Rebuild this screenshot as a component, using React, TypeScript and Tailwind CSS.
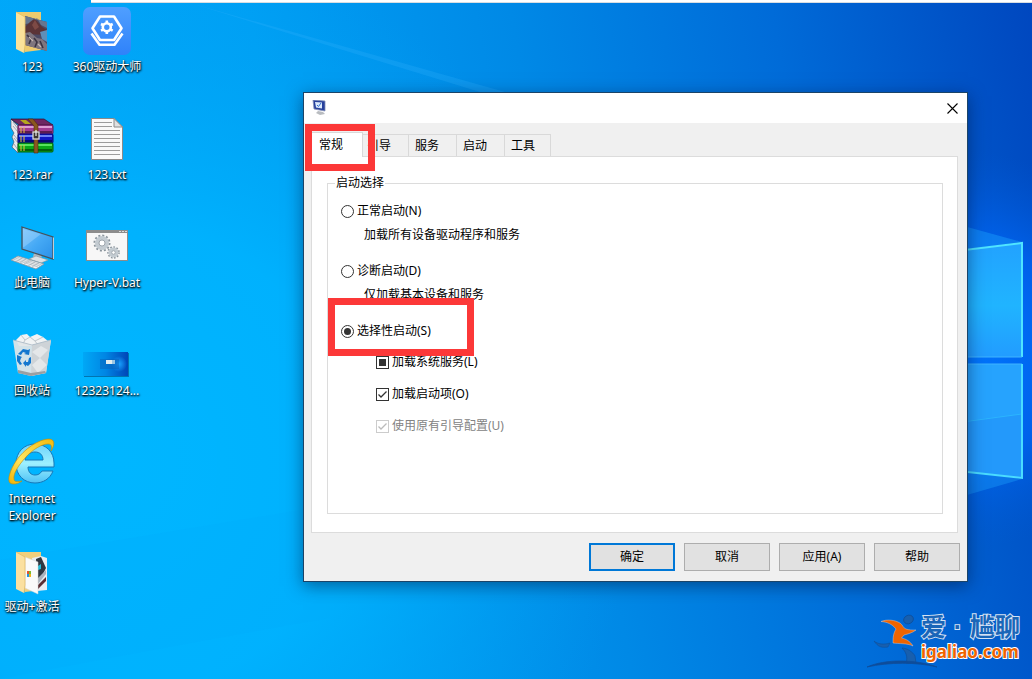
import { useEffect, useRef, useState } from "react";
import type { ReactNode } from "react";

const TABS = ["常规", "引导", "服务", "启动", "工具"];

function Wallpaper() {
  return (
    <svg
      className="absolute inset-0 h-full w-full"
      viewBox="0 0 1032 679"
      preserveAspectRatio="none"
      aria-hidden="true"
    >
      <defs>
        <linearGradient id="sky" x1="0" y1="0.12" x2="1" y2="0">
          <stop offset="0" stopColor="#00a9fb" />
          <stop offset="0.25" stopColor="#009ff4" />
          <stop offset="0.5" stopColor="#0089e6" />
          <stop offset="0.75" stopColor="#006bd8" />
          <stop offset="1" stopColor="#0047bf" />
        </linearGradient>
        <radialGradient id="leftGlow" gradientUnits="userSpaceOnUse" cx="120" cy="460" r="520">
          <stop offset="0" stopColor="#00b6ff" />
          <stop offset="0.45" stopColor="#00b4ff" stopOpacity="0.85" />
          <stop offset="1" stopColor="#00a0f0" stopOpacity="0" />
        </radialGradient>
        <radialGradient id="windowGlow" gradientUnits="userSpaceOnUse" cx="960" cy="350" r="200">
          <stop offset="0" stopColor="#0078ff" />
          <stop offset="0.55" stopColor="#0068fa" stopOpacity="0.7" />
          <stop offset="1" stopColor="#005ad8" stopOpacity="0" />
        </radialGradient>
        <linearGradient id="pane" x1="0" y1="0" x2="0" y2="1">
          <stop offset="0" stopColor="#22a2ff" />
          <stop offset="0.55" stopColor="#20b4ff" />
          <stop offset="1" stopColor="#229cff" />
        </linearGradient>
      </defs>
      <rect width="1032" height="679" fill="url(#sky)" />
      <rect width="1032" height="679" fill="url(#leftGlow)" />
      <rect width="1032" height="679" fill="url(#windowGlow)" />
      <path d="M190 3 L505 92 L480 92 Z" fill="#3bb8ff" opacity="0.22" />
      <path d="M0 560 Q150 535 330 505 L330 618 Q150 650 0 679 Z" fill="#00a8fa" opacity="0.2" />
      <path d="M960 225 L1022 242 L960 250 Z" fill="#1fa8ff" opacity="0.4" />
      <path d="M960 497 L1022 479 L960 471 Z" fill="#1fa8ff" opacity="0.35" />
      <path d="M940 253 L1022 243 V357 H940 Z" fill="url(#pane)" />
      <path d="M940 364 H1022 V478 L940 469 Z" fill="#2399fb" />
      <path d="M940 364 H1022 V414 L940 424 Z" fill="#28a6ff" opacity="0.7" />
      <path d="M940 425 L1022 414" stroke="#2fc0ff" opacity="0.7" />
      <path d="M940 253 L1022 243 V357" fill="none" stroke="#4fe4ff" strokeWidth="2" />
      <path d="M940 357 H1022 M940 364 H1022" stroke="#3fb4ff" />
      <path d="M1022 364 V478 L940 469" fill="none" stroke="#4adcff" strokeWidth="2" />
    </svg>
  );
}

function DesktopSvg({ children }: { children: ReactNode }) {
  return (
    <svg className="h-12 w-12 overflow-visible" viewBox="0 0 48 48" aria-hidden="true">
      {children}
    </svg>
  );
}

function PhotoFolderIcon() {
  return (
    <DesktopSvg>
      <path d="M8 4 H33 V42 L17 44 Z" fill="#eecb6e" />
      <path d="M17 8 L39 14 V43 L17 37 Z" fill="#4c4a63" />
      <path d="M17 8 L39 14 V20 L33 17 L29 10 L24 15 L17 16 Z" fill="#66768f" />
      <path d="M17 19 L22 14 L26 11 L29 13 L34 19 L39 22 V27 L17 26 Z" fill="#5b3436" />
      <path d="M24 17 L27 12 L31 19 L27 22 Z" fill="#7d4a45" />
      <path d="M32 24 L39 22 V34 L34 31 Z" fill="#5f8fb8" />
      <path d="M17 25 L22 24 L29 30 L34 31 L39 36 V43 L17 37 Z" fill="#7f767e" />
      <path d="M19 27 L23 31 L21 36 M26 30 L29 34 L27 39 M32 33 L35 40" stroke="#3b3442" strokeWidth="1.6" fill="none" />
      <path d="M21 29 L25 33 M30 36 L33 39" stroke="#c9b9b3" strokeWidth="1.2" />
      <path d="M8 4 L17 9 V37 L16 45 L8 41 Z" fill="#fbe29a" />
      <path d="M8 4 L17 9 V37 L16 45" fill="none" stroke="#e6bf5f" strokeWidth="0.8" />
    </DesktopSvg>
  );
}

function ToolFolderIcon() {
  return (
    <DesktopSvg>
      <path d="M8 4 H33 V42 L17 44 Z" fill="#f1cf7c" />
      <path d="M24 10 L33 8 L39 10 V42 L29 43 Z" fill="#e9edf1" />
      <path d="M28 11 L33 9 L38 20 L34 28 L29 31 Z" fill="#303741" />
      <path d="M29 31 L38 22 V26 L30 36 Z" fill="#aab2bd" />
      <path d="M30 37 L38 29 V33 L30 41 Z" fill="#5a2d33" />
      <path d="M30 18 L33 16 V21 L30 22 Z" fill="#23bcd8" />
      <path d="M17 9 L30 14 V46 L17 40 Z" fill="#fafafa" stroke="#d7d7d7" strokeWidth="0.5" />
      <path d="M19 23 H21 V26 H19 Z" fill="#e5552d" />
      <path d="M21 23 H23 V26 H21 Z" fill="#7dba2e" />
      <path d="M19 26 H21 V29 H19 Z" fill="#2196e0" />
      <path d="M21 26 H23 V29 H21 Z" fill="#f2b31c" />
      <path d="M8 4 L17 9 V37 L16 45 L8 41 Z" fill="#fbe0a0" />
      <path d="M8 4 L17 9 V37 L16 45" fill="none" stroke="#e2bd69" strokeWidth="0.8" />
    </DesktopSvg>
  );
}

function RarIcon() {
  const books = [
    { y: 9, dark: "#5c1d52", main: "#a23a92", light: "#dd9ad3", bands: "M13 11 V17 M16 11 V17" },
    { y: 18, dark: "#060872", main: "#1018c4", light: "#6a80f5", bands: "M13 20 V26 M16 20 V26" },
    { y: 27, dark: "#04600c", main: "#0aa818", light: "#56e45c", bands: "M13 29 V35 M16 29 V35" },
  ];
  return (
    <DesktopSvg>
      <path d="M3 3 L10 10 V37 L4 31 L6 26 L4 21 L6 17 L3 12 Z" fill="#e8e8ee" stroke="#4a4a58" strokeWidth="0.6" />
      <path d="M5 6 L10 13 M5 10 L10 16 M6 19 L10 24 M6 22 L10 27 M6 28 L10 34" stroke="#8a8a99" strokeWidth="0.7" />
      <path d="M3 3 H36 L45 9 H11 Z" fill="#6e2662" stroke="#32102c" strokeWidth="0.7" />
      <path d="M12 4 H18 L23 8 H17 Z" fill="#b5a71d" />
      {books.map((book) => (
        <g key={book.y}>
          <rect x="10" y={book.y} width="35" height="9" rx="1" fill={book.main} stroke={book.dark} />
          <rect x="11" y={book.y + 1} width="33" height="2" fill={book.light} />
          <rect x="11" y={book.y + 6} width="33" height="2" fill={book.dark} />
          <path d={book.bands} stroke="#e3c341" strokeWidth="1" />
        </g>
      ))}
      <path d="M20 3 H25 L30 9 V37 H26 V10 Z" fill="#8b5720" stroke="#4e2c0a" strokeWidth="0.6" />
      <rect x="25" y="16" width="6" height="7" fill="#3a3430" stroke="#d9d9d9" strokeWidth="1.3" />
      <path d="M28 14 V20" stroke="#f0f0f0" strokeWidth="1.2" />
    </DesktopSvg>
  );
}

function ComputerIcon() {
  return (
    <DesktopSvg>
      <defs>
        <linearGradient id="screen" x1="0" y1="0" x2="1" y2="1">
          <stop offset="0" stopColor="#7ac4fb" />
          <stop offset="0.5" stopColor="#45a9f5" />
          <stop offset="1" stopColor="#2a90e8" />
        </linearGradient>
      </defs>
      <path d="M26 29 L34 31 L33 35 L25 33 Z" fill="#aeb7bf" />
      <path d="M21 35 L28 32 L40 36 L33 39 Z" fill="#dde2e6" stroke="#8d979f" strokeWidth="0.6" />
      <path d="M14 3 L45 13 V35 L14 25 Z" fill="url(#screen)" stroke="#47535d" strokeWidth="1.3" />
      <path d="M15 5 L33 10 L16 23 L15 23 Z" fill="#b6e0ff" opacity="0.35" />
      <path d="M45 13 L46 14 V35 L45 35" fill="#c3ccd3" />
      <path d="M3 36 L10 32 L36 40 L28 45 Z" fill="#f0f2f4" stroke="#8b959d" strokeWidth="0.8" />
      <path
        d="M5 35 L30 43 M7 34 L32 42 M9 33 L34 41 M8 38 L14 34 M12 39 L18 35 M16 40 L23 36 M20 42 L27 38 M24 43 L31 39"
        stroke="#a2abb2"
        strokeWidth="0.6"
      />
    </DesktopSvg>
  );
}

function RecycleIcon() {
  return (
    <DesktopSvg>
      <path d="M8 8 L13 3 L19 2 L22 5 L29 2 L35 5 L40 9 L38 14 H11 Z" fill="#f1f3f4" />
      <path d="M13 3 L17 8 L22 5 L27 9 L35 5 M17 8 L15 12 M27 9 L30 13" stroke="#bfc6cb" strokeWidth="1" fill="none" />
      <path d="M5 8 L24 13 L43 8 L38 41 L23 44 L10 41 Z" fill="#e2e5e7" opacity="0.93" />
      <path d="M24 13 L43 8 L38 41 L23 44 Z" fill="#ced3d7" />
      <path d="M24 20 L33 14 L40 18 L32 26 Z M24 33 L32 26 L39 33 L30 41 Z" fill="#e4e7e9" />
      <path d="M5 8 L24 13 L43 8" fill="none" stroke="#a7b8c4" strokeWidth="0.8" />
      <path d="M10 41 L23 44 L38 41 L37 39 L23 41 L10 38 Z" fill="#9b9fa2" />
      <g fill="#1377cf">
        <path d="M12 20 L15 17 L20 18 L22 17 L21 23 L16 22 L18 21 L15 20 L13 23 L10 22 Z" />
        <path d="M9 23 L14 25 L13 26 L12 29 L14 32 L12 33 L9 29 Z" />
        <path d="M15 31 L18 28 V30 L20 30 L21 26 L23 25 L23 31 L20 34 L18 33 V35 Z" />
      </g>
    </DesktopSvg>
  );
}

function ExplorerIcon() {
  return (
    <DesktopSvg>
      <defs>
        <linearGradient id="ieBody" x1="0" y1="0" x2="0" y2="1">
          <stop offset="0" stopColor="#6fd3fb" />
          <stop offset="0.5" stopColor="#9df0ff" />
          <stop offset="1" stopColor="#4fc2f5" />
        </linearGradient>
        <linearGradient id="ieRing" x1="0" y1="1" x2="1" y2="0">
          <stop offset="0" stopColor="#f2b200" />
          <stop offset="0.4" stopColor="#ffe661" />
          <stop offset="1" stopColor="#f3b90c" />
        </linearGradient>
      </defs>
      <path
        d="M46 27 H20 C20 32 23 35 27 35 C30 35 32 34 34 31 H45 C42 39 35 43 27 43 C16 43 8 35 8 24 C8 12 16 4 27 4 C38 4 46 12 46 23 Z M17 20 H35 C35 15 32 12 27 12 C22 12 18 15 17 20 Z"
        fill="url(#ieBody)"
        stroke="#1878b8"
        strokeWidth="1"
        fillRule="evenodd"
      />
      <path
        d="M43 11 C47 5 47 -1 41 -1 C31 -1 16 9 8 21 C2 30 -1 40 2 43 C5 45 10 44 14 41 C9 42 6 42 6 39 C5 34 10 26 17 18 C25 9 34 4 40 4 C44 4 44 7 43 11 Z"
        fill="url(#ieRing)"
        stroke="#c68a00"
        strokeWidth="0.6"
      />
    </DesktopSvg>
  );
}

function DriverIcon() {
  return (
    <DesktopSvg>
      <defs>
        <linearGradient id="driver" x1="0" y1="0" x2="0" y2="1">
          <stop offset="0" stopColor="#4f9fff" />
          <stop offset="1" stopColor="#2f82fa" />
        </linearGradient>
      </defs>
      <rect x="0" y="-1" width="48" height="48" rx="7" fill="url(#driver)" />
      <g fill="none" stroke="#fff" strokeWidth="2.6" strokeLinejoin="round">
        <path d="M9.5 20.3 L17 8.5 H31 L38.5 20.3 L31 32 H17 Z" />
        <path d="M8.5 25.5 L16.5 36.7 H31.5 L39.5 25.5" />
        <circle cx="23.8" cy="19.3" r="4" />
      </g>
      <path
        d="M23.8 12.5 V15 M23.8 23.5 V26 M18 16 L20 17 M27.7 21.6 L29.7 22.7 M29.7 16 L27.7 17 M20 21.6 L18 22.7"
        stroke="#fff"
        strokeWidth="2.6"
      />
    </DesktopSvg>
  );
}

function TextFileIcon() {
  return (
    <DesktopSvg>
      <path d="M8.5 2.5 H31 L39.5 11 V43.5 H8.5 Z" fill="#f9f9f9" stroke="#8a8a8a" />
      <path d="M31 2.5 V11 H39.5 Z" fill="#e0e0e0" stroke="#8a8a8a" />
      <path
        d="M11 6.5 H29 M11 10.5 H29 M11 14.5 H37 M11 18.5 H37 M11 22.5 H37 M11 26.5 H37 M11 30.5 H37 M11 34.5 H37 M11 38.5 H37"
        stroke="#9c9c9c"
      />
    </DesktopSvg>
  );
}

function BatchFileIcon() {
  return (
    <DesktopSvg>
      <rect x="3.5" y="6.5" width="41" height="30" fill="#f7f7f7" stroke="#8c8c8c" />
      <rect x="3" y="6" width="42" height="3" fill="#8c8c8c" />
      <path d="M36 7.5 H38 M39 7.5 H41 M42 7.5 H44" stroke="#dcdcdc" />
      <circle cx="19" cy="19" r="7.5" fill="none" stroke="#8a949c" strokeWidth="2" strokeDasharray="2 1.93" />
      <circle cx="19" cy="19" r="5" fill="#fff" stroke="#c3cbd1" strokeWidth="4" />
      <circle cx="19" cy="19" r="3" fill="#fff" stroke="#8a949c" strokeWidth="0.8" />
      <circle cx="30.5" cy="28.5" r="5.5" fill="none" stroke="#8a949c" strokeWidth="1.6" strokeDasharray="1.6 1.54" />
      <circle cx="30.5" cy="28.5" r="3.5" fill="#fff" stroke="#c3cbd1" strokeWidth="3" />
      <circle cx="30.5" cy="28.5" r="1.8" fill="#fff" stroke="#8a949c" strokeWidth="0.8" />
    </DesktopSvg>
  );
}

function ImageFileIcon() {
  return (
    <DesktopSvg>
      <defs>
        <linearGradient id="thumb" x1="0" y1="0" x2="1" y2="0">
          <stop offset="0" stopColor="#00a8f6" />
          <stop offset="0.5" stopColor="#0086e4" />
          <stop offset="1" stopColor="#0046b8" />
        </linearGradient>
        <radialGradient id="thumbGlow">
          <stop offset="0" stopColor="#1aa0ff" />
          <stop offset="1" stopColor="#1aa0ff" stopOpacity="0" />
        </radialGradient>
      </defs>
      <rect x="1" y="21" width="45" height="24" fill="#00406f" opacity="0.55" />
      <rect x="0" y="20" width="45" height="24" fill="url(#thumb)" />
      <circle cx="36" cy="32" r="8" fill="url(#thumbGlow)" />
      <rect x="17" y="27" width="19" height="10" fill="#0a5fb4" opacity="0.45" />
      <rect x="23" y="28" width="6" height="4" fill="#e5eef0" />
      <rect x="29" y="28" width="3" height="4" fill="#9cc7e4" />
    </DesktopSvg>
  );
}

const SHORTCUTS = [
  { label: "123", icon: <PhotoFolderIcon /> },
  { label: "123.rar", icon: <RarIcon /> },
  { label: "此电脑", icon: <ComputerIcon /> },
  { label: "回收站", icon: <RecycleIcon /> },
  { label: "Internet Explorer", icon: <ExplorerIcon /> },
  { label: "驱动+激活", icon: <ToolFolderIcon /> },
  { label: "360驱动大师", icon: <DriverIcon /> },
  { label: "123.txt", icon: <TextFileIcon /> },
  { label: "Hyper-V.bat", icon: <BatchFileIcon /> },
  { label: "12323124...", icon: <ImageFileIcon /> },
];

function RadioOption({
  label,
  checked,
  onSelect,
}: {
  label: string;
  checked: boolean;
  onSelect: () => void;
}) {
  return (
    <label className="flex h-4 w-fit items-center gap-[3px]">
      <input
        type="radio"
        name="startup"
        checked={checked}
        onChange={onSelect}
        className="grid size-[13px] shrink-0 appearance-none place-items-center rounded-full border border-[#333] bg-white checked:before:size-[7px] checked:before:rounded-full checked:before:bg-[#333]"
      />
      {label}
    </label>
  );
}

function CheckOption({
  label,
  partial = false,
  disabled = false,
}: {
  label: string;
  partial?: boolean;
  disabled?: boolean;
}) {
  const ref = useRef<HTMLInputElement>(null);

  useEffect(() => {
    if (ref.current) ref.current.indeterminate = partial;
  }, [partial]);

  return (
    <label className={`flex h-4 w-fit items-center gap-[3px] ${disabled ? "text-[#838383]" : ""}`}>
      <span className="grid size-[13px] shrink-0">
        <input
          ref={ref}
          type="checkbox"
          defaultChecked={!partial}
          disabled={disabled}
          className="peer col-start-1 row-start-1 grid size-[13px] appearance-none place-items-center border border-[#333] bg-white indeterminate:before:size-[7px] indeterminate:before:bg-[#333] disabled:border-[#ccc]"
        />
        <svg
          viewBox="0 0 13 13"
          className="pointer-events-none invisible col-start-1 row-start-1 size-[13px] text-[#333] peer-checked:visible peer-disabled:text-[#bbb]"
          aria-hidden="true"
        >
          <path d="M2.5 6.5 L5 9 L10.5 3.5" fill="none" stroke="currentColor" strokeWidth="1.3" />
        </svg>
      </span>
      {label}
    </label>
  );
}

function GeneralPanel() {
  const [mode, setMode] = useState("S");

  return (
    <fieldset className="min-h-[339px] border border-[#dcdcdc] pl-[13px]">
      <legend className="-ml-1.5 px-px leading-4">启动选择</legend>
      <div className="pt-3">
        <RadioOption label="正常启动(N)" checked={mode === "N"} onSelect={() => setMode("N")} />
        <p className="mt-2 pl-[23px]">加载所有设备驱动程序和服务</p>
      </div>
      <div className="pt-5">
        <RadioOption label="诊断启动(D)" checked={mode === "D"} onSelect={() => setMode("D")} />
        <p className="mt-2 pl-[23px]">仅加载基本设备和服务</p>
      </div>
      <div className="pt-5">
        <RadioOption label="选择性启动(S)" checked={mode === "S"} onSelect={() => setMode("S")} />
        <div className="mt-[15px] flex flex-col gap-4 pl-[35px]">
          <CheckOption label="加载系统服务(L)" partial />
          <CheckOption label="加载启动项(O)" />
          <CheckOption label="使用原有引导配置(U)" disabled />
        </div>
      </div>
    </fieldset>
  );
}

function ConfigDialog() {
  const [activeTab, setActiveTab] = useState(TABS[0]);

  return (
    <section
      role="dialog"
      className="absolute top-[92px] right-16 left-[303px] border border-[#1b4468] bg-[#f0f0f0] text-xs leading-4 text-black shadow-[0_4px_16px_rgba(0,20,60,0.5)]"
    >
      <header className="flex h-[30px] items-center justify-between bg-white pr-[7px] pl-2">
        <svg className="size-4" viewBox="0 0 16 16" aria-hidden="true">
          <path d="M6 11 L11 12 L13 14 L8 15 L4 13 Z" fill="#b9bcc0" />
          <path d="M1 0 L13 1 V11 L2 9 Z" fill="#27409c" stroke="#8490b8" strokeWidth="0.8" />
          <path d="M3 2 L10 2.500 V8.500 L4 7.500 Z" fill="#dbe9fb" />
          <path d="M5 5 L6.500 6.500 L9 3" fill="none" stroke="#2f6fd0" strokeWidth="1" />
        </svg>
        <button type="button" aria-label="关闭" className="grid size-4 place-items-center">
          <svg className="size-[11px]" viewBox="0 0 11 11" aria-hidden="true">
            <path d="M0.5 0.5 L10.5 10.5 M10.5 0.5 L0.5 10.5" stroke="#000" strokeWidth="1.1" />
          </svg>
        </button>
      </header>

      <div className="pt-[9px] pr-[9px] pl-[7px]">
        <div role="tablist" className="flex items-end">
          {TABS.map((tab) => (
            <button
              key={tab}
              type="button"
              role="tab"
              aria-selected={activeTab === tab}
              onClick={() => setActiveTab(tab)}
              className={`border-[#d9d9d9] text-left ${
                activeTab === tab
                  ? "z-10 -mr-0.5 -mb-px h-[25px] w-[52px] border-x border-t bg-white pl-[7px]"
                  : "h-[22px] w-12 border-t border-r pl-1.5 last:w-[46px]"
              }`}
            >
              {tab}
            </button>
          ))}
        </div>
        <div role="tabpanel" className="min-h-[377px] border border-[#dcdcdc] bg-white pt-[18px] pr-3.5 pb-[18px] pl-[15px]">
          {activeTab === TABS[0] && <GeneralPanel />}
        </div>
      </div>

      <footer className="flex justify-end gap-[9px] py-2.5 pr-[7px]">
        <button type="button" className="h-7 w-[86px] border-2 border-[#0078d7] bg-[#e1e1e1]">
          确定
        </button>
        <button type="button" className="h-7 w-[86px] border border-[#adadad] bg-[#e1e1e1]">
          取消
        </button>
        <button type="button" className="h-7 w-[86px] border border-[#adadad] bg-[#e1e1e1]">
          应用(A)
        </button>
        <button type="button" className="h-7 w-[86px] border border-[#adadad] bg-[#e1e1e1]">
          帮助
        </button>
      </footer>

      {/* highlight frames */}
      <div className="pointer-events-none absolute top-[31px] left-px z-20 h-[47px] w-[70px] border-[7px] border-[#fc3838]" />
      <div className="pointer-events-none absolute top-[205px] left-6 z-20 h-[58px] w-[146px] border-[7px] border-[#fc3838]" />
    </section>
  );
}

function Watermark() {
  return (
    <div className="absolute right-3 bottom-[9px] flex items-start">
      <svg className="-mr-4 h-14 w-[70px] overflow-visible" viewBox="0 0 70 56" aria-hidden="true">
        <ellipse cx="41.5" cy="5.5" rx="5" ry="4.2" fill="#185fae" stroke="#0d4c96" strokeWidth="0.7" transform="rotate(-25 41.5 5.5)" />
        <path d="M35 34 C40 34 46 38 48 42 L49 49 H39 C41 43 39 38 35 34 Z" fill="#185fae" stroke="#0d4c96" strokeWidth="0.6" />
        <path d="M7 27 C11 30 16 31 23 29 L21 33 C15 34 11 33 7 27 Z" fill="#185fae" stroke="#0d4c96" strokeWidth="0.5" />
        <path d="M0 53 C18 45 48 45 70 53 C50 48 22 48 0 53 Z" fill="#0e4c9a" stroke="#0e4c9a" strokeWidth="0.8" />
        <path
          d="M14 7.500 C20 5 28 6 33 9 C36 11 36 14 39 15 C42 16 45 16 49 16 C45 19 41 20 37 21 L34.500 24 C39 25 43 27 46 32 C40 29 32 30 26 29 C26 24 26 20 29 15 C25 10 20 8 14 7.500 Z"
          fill="#ef6400"
          stroke="#d4dceb"
          strokeWidth="0.4"
        />
      </svg>
      <div className="w-[99px]">
        <div className="flex justify-between font-['Liberation_Sans','Noto_Sans_CJK_SC',sans-serif] text-[25px] leading-[26px] font-bold text-[#1a66b8] [-webkit-text-stroke:2px_#d3e2f4] [paint-order:stroke_fill]">
          <span>爱</span>
          <span>·</span>
          <span>尴聊</span>
        </div>
        <a
          href="#"
          className="block text-[17px] leading-6 font-bold text-[#ef6400] [-webkit-text-stroke:2px_#ffffff] [paint-order:stroke_fill]"
        >
          igaliao.com
        </a>
      </div>
    </div>
  );
}

export default function App() {
  return (
    <main className="relative min-h-screen overflow-hidden bg-[#0099ee] font-['Noto_Sans','Noto_Sans_CJK_SC',sans-serif]">
      <Wallpaper />
      <div className="absolute top-0 right-0 left-[91px] h-[3px] border-b border-[#d8dde2] bg-white" />

      <nav className="relative grid w-fit grid-flow-col grid-cols-[64px_86px] grid-rows-[repeat(6,108px)]">
        {SHORTCUTS.map((item) => (
          <button
            key={item.label}
            type="button"
            className="flex flex-col items-center gap-0.5 pt-2 text-center text-xs leading-[17px] text-white [text-shadow:1px_1px_2px_#000,0_1px_2px_#000]"
          >
            {item.icon}
            {item.label}
          </button>
        ))}
      </nav>

      <ConfigDialog />
      <Watermark />
    </main>
  );
}
